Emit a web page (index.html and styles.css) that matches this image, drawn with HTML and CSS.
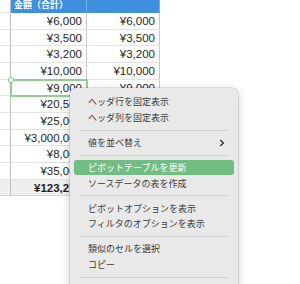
FILE: index.html
```html
<!DOCTYPE html>
<html lang="ja">
<head>
  <meta charset="UTF-8" />
  <title>Pivot</title>
  <link rel="stylesheet" href="styles.css">
</head>
<body>
  <div class="sheet">
    <div class="grid">
      <div class="cell side head-side"></div>
      <div class="cell head">金額（合計）</div>
      <div class="cell head"></div>

      <div class="cell side"></div><div class="cell">¥6,000</div><div class="cell">¥6,000</div>
      <div class="cell side"></div><div class="cell">¥3,500</div><div class="cell">¥3,500</div>
      <div class="cell side"></div><div class="cell">¥3,200</div><div class="cell">¥3,200</div>
      <div class="cell side"></div><div class="cell">¥10,000</div><div class="cell">¥10,000</div>
      <div class="cell side"></div><div class="cell selected">¥9,000</div><div class="cell">¥9,000</div>
      <div class="cell side"></div><div class="cell">¥20,500</div><div class="cell">¥20,500</div>
      <div class="cell side"></div><div class="cell">¥25,000</div><div class="cell">¥25,000</div>
      <div class="cell side"></div><div class="cell">¥3,000,000</div><div class="cell">¥3,000,000</div>
      <div class="cell side"></div><div class="cell">¥8,000</div><div class="cell">¥8,000</div>
      <div class="cell side"></div><div class="cell">¥35,000</div><div class="cell">¥35,000</div>
      <div class="cell side total"></div><div class="cell total">¥123,270</div><div class="cell total">¥123,270</div>
    </div>

    <div class="menu">
      <div class="item">ヘッダ行を固定表示</div>
      <div class="item">ヘッダ列を固定表示</div>
      <div class="sep"></div>
      <div class="item">値を並べ替え
        <svg class="chev" width="6" height="8" viewBox="0 0 6 8"><polyline points="1.2,1 4.4,4 1.2,7" fill="none" stroke="#333" stroke-width="1.4"/></svg>
      </div>
      <div class="sep"></div>
      <div class="item active">ピボットテーブルを更新</div>
      <div class="item">ソースデータの表を作成</div>
      <div class="sep"></div>
      <div class="item">ピボットオプションを表示</div>
      <div class="item">フィルタのオプションを表示</div>
      <div class="sep"></div>
      <div class="item">類似のセルを選択</div>
      <div class="item">コピー</div>
      <div class="sep"></div>
    </div>
  </div>
</body>
</html>
```

FILE: styles.css
```css
body {
  margin: 0;
  background: #fff;
  font-family: "Liberation Sans", "Noto Sans CJK JP", sans-serif;
}
.sheet {
  position: relative;
  width: 300px;
  height: 284px;
  overflow: hidden;
}
.grid {
  display: grid;
  grid-template-columns: 11px 76px 73px;
  grid-template-rows: 13px repeat(11, 16.67px);
  width: 160px;
}
.cell {
  box-sizing: border-box;
  border-bottom: 1px solid #e3e3e3;
  border-right: 1px solid #c9c9c9;
  font-size: 11.5px;
  color: #1e1e1e;
  text-align: right;
  padding-right: 4px;
  line-height: 16px;
  white-space: nowrap;
  overflow: hidden;
}
.side {
  border-right: 1px solid #bdbdbd;
  padding: 0;
}
.head {
  background: #3f8fdf;
  color: #fff;
  font-family: "Noto Sans CJK JP", sans-serif;
  font-weight: bold;
  font-size: 9px;
  text-align: left;
  padding-left: 3px;
  line-height: 9px;
  border-bottom: 1px solid #3f8fdf;
  border-right: 1px solid #76aee8;
  display: flex;
  align-items: flex-end;
  padding-bottom: 3px;
}
.head-side {
  background: #fff;
  border-bottom: 1px solid #e3e3e3;
}
.total {
  background: #efefef;
  font-weight: bold;
  border-bottom: 1px solid #d6d6d6;
}
.selected {
  position: relative;
  overflow: visible;
  outline: 2px solid #8fd091;
  outline-offset: -1px;
}
.selected::before {
  content: "";
  position: absolute;
  left: -3px;
  top: -3px;
  width: 4px;
  height: 4px;
  border: 1px solid #7cc47f;
  border-radius: 50%;
  background: #fff;
}
.menu {
  position: absolute;
  left: 70px;
  top: 88px;
  width: 168px;
  height: 210px;
  box-sizing: border-box;
  padding: 6px 4px;
  background: #e9e9e9;
  border-radius: 6px;
  box-shadow: 0 0 0 0.5px rgba(0, 0, 0, 0.18), 0 3px 10px rgba(0, 0, 0, 0.22);
  font-family: "Noto Sans CJK JP", sans-serif;
  font-size: 9px;
  color: #3a3a3a;
}
.item {
  display: flex;
  align-items: center;
  justify-content: space-between;
  height: 15.7px;
  padding: 0 11px 0 14px;
  border-radius: 3px;
}
.item.active {
  background: #72bd84;
  color: #fff;
}
.chev {
  margin-right: -2px;
}
.sep {
  height: 9.3px;
  margin: 0 6px;
  display: flex;
  align-items: center;
}
.sep::after {
  content: "";
  flex: 1;
  height: 1px;
  background: #d2d2d2;
}
```
